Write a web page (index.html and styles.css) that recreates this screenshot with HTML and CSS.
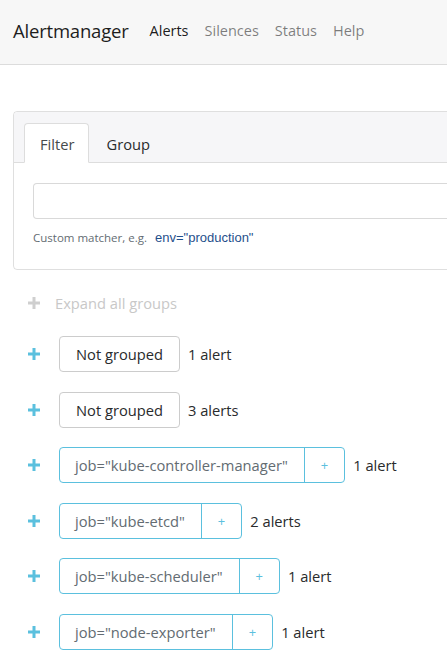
FILE: index.html
```html
<!DOCTYPE html>
<html>
<head>
<meta charset="utf-8">
<link rel="stylesheet" href="styles.css">
</head>
<body>
<nav class="navbar">
  <span class="brand">Alertmanager</span>
  <ul class="nav">
    <li class="active">Alerts</li>
    <li>Silences</li>
    <li>Status</li>
    <li>Help</li>
  </ul>
</nav>
<main class="container">
  <section class="card">
    <div class="card-header">
      <ul class="tabs">
        <li class="tab active">Filter</li>
        <li class="tab">Group</li>
      </ul>
    </div>
    <div class="card-body">
      <div class="input"></div>
      <div class="help">Custom matcher, e.g. <span class="example">env="production"</span></div>
    </div>
  </section>

  <div class="expand-all">
    <svg class="plus" viewBox="0 0 12 12"><path d="M4.5 0h3v4.5H12v3H7.5V12h-3V7.5H0v-3h4.5z"/></svg>
    <span>Expand all groups</span>
  </div>

  <ul class="groups">
    <li class="group">
      <svg class="plus" viewBox="0 0 12 12"><path d="M4.5 0h3v4.5H12v3H7.5V12h-3V7.5H0v-3h4.5z"/></svg>
      <span class="btn plain">Not grouped</span>
      <span class="count">1 alert</span>
    </li>
    <li class="group">
      <svg class="plus" viewBox="0 0 12 12"><path d="M4.5 0h3v4.5H12v3H7.5V12h-3V7.5H0v-3h4.5z"/></svg>
      <span class="btn plain">Not grouped</span>
      <span class="count">3 alerts</span>
    </li>
    <li class="group">
      <svg class="plus" viewBox="0 0 12 12"><path d="M4.5 0h3v4.5H12v3H7.5V12h-3V7.5H0v-3h4.5z"/></svg>
      <span class="btn-group"><span class="btn label">job="kube-controller-manager"</span><span class="btn add">+</span></span>
      <span class="count">1 alert</span>
    </li>
    <li class="group">
      <svg class="plus" viewBox="0 0 12 12"><path d="M4.5 0h3v4.5H12v3H7.5V12h-3V7.5H0v-3h4.5z"/></svg>
      <span class="btn-group"><span class="btn label">job="kube-etcd"</span><span class="btn add">+</span></span>
      <span class="count">2 alerts</span>
    </li>
    <li class="group">
      <svg class="plus" viewBox="0 0 12 12"><path d="M4.5 0h3v4.5H12v3H7.5V12h-3V7.5H0v-3h4.5z"/></svg>
      <span class="btn-group"><span class="btn label">job="kube-scheduler"</span><span class="btn add">+</span></span>
      <span class="count">1 alert</span>
    </li>
    <li class="group">
      <svg class="plus" viewBox="0 0 12 12"><path d="M4.5 0h3v4.5H12v3H7.5V12h-3V7.5H0v-3h4.5z"/></svg>
      <span class="btn-group"><span class="btn label">job="node-exporter"</span><span class="btn add">+</span></span>
      <span class="count">1 alert</span>
    </li>
  </ul>
</main>
</body>
</html>
```
FILE: styles.css
```css
html, body {
  margin: 0;
  padding: 0;
  overflow: hidden;
}
body {
  font-family: "Open Sans", "Noto Sans", sans-serif;
  font-size: 14.7px;
  color: #292b2c;
  background: #fff;
  width: 447px;
}
ul { list-style: none; margin: 0; padding: 0; }

.navbar {
  height: 65px;
  box-sizing: border-box;
  background: #f7f7f7;
  border-bottom: 1px solid #dcdcdc;
  display: flex;
  align-items: center;
  padding: 0 0 4px 13px;
}
.brand {
  font-size: 18.5px;
  color: #1d1d1d;
  margin-right: 13px;
  letter-spacing: -0.2px;
}
.nav { display: flex; }
.nav li {
  padding: 0 8px;
  font-size: 14.5px;
  color: rgba(0,0,0,.5);
}
.nav li.active { color: rgba(0,0,0,.9); }

.container {
  padding: 46px 0 0 13px;
}
.card {
  width: 700px;
  border: 1px solid rgba(0,0,0,.125);
  border-radius: 4px;
  box-sizing: border-box;
}
.card-header {
  background: #f6f6f8;
  border-bottom: 1px solid #ddd;
  padding: 11px 10px 0;
  border-radius: 4px 4px 0 0;
}
.tabs { display: flex; margin-bottom: -1px; }
.tab {
  height: 40px;
  box-sizing: border-box;
  padding: 0 15px;
  line-height: 40px;
  border: 1px solid transparent;
  border-radius: 4px 4px 0 0;
  color: #292b2c;
}
.tab.active {
  background: #fff;
  border-color: #ddd #ddd #fff;
  color: #464a4c;
  padding: 0 14px 0 15px;
}
.tab + .tab { padding-left: 16px; }

.card-body {
  padding: 20px 19px 22px;
}
.input {
  height: 36px;
  box-sizing: border-box;
  border: 1px solid rgba(0,0,0,.15);
  border-radius: 4px;
  background: #fff;
}
.help {
  margin-top: 10px;
  font-size: 11.5px;
  color: #636c72;
  line-height: 18px;
}
.example {
  font-family: "Liberation Sans", Arial, sans-serif;
  font-size: 13px;
  color: #1f4f8c;
  margin-left: 5px;
}

.expand-all {
  display: flex;
  align-items: center;
  margin-top: 23px;
  padding-left: 15px;
  height: 20px;
  color: #c8c8c8;
}
.expand-all .plus { fill: #cfcfcf; margin-right: 15px; }

.plus {
  width: 12px;
  height: 12px;
}

.groups {
  margin-top: 23px;
}
.group {
  display: flex;
  align-items: center;
  height: 36px;
  margin-bottom: 19.6px;
  padding-left: 15px;
}
.group .plus {
  fill: #5bc0de;
  margin-right: 19px;
}
.btn {
  display: inline-flex;
  align-items: center;
  height: 36px;
  box-sizing: border-box;
  padding: 0 16px;
}
.btn.plain {
  border: 1px solid #ccc;
  border-radius: 4px;
  color: #292b2c;
}
.btn-group {
  display: inline-flex;
  border: 1px solid #5bc0de;
  border-radius: 4px;
  height: 36px;
  box-sizing: border-box;
}
.btn-group .btn { height: 34px; }
.btn.label {
  color: #636c72;
  padding: 0 16px 0 15px;
}
.btn.add {
  border-left: 1px solid #5bc0de;
  color: #5bc0de;
  font-size: 13px;
  padding: 0 16px;
}
.count {
  margin-left: 8px;
  color: #292b2c;
}
```
